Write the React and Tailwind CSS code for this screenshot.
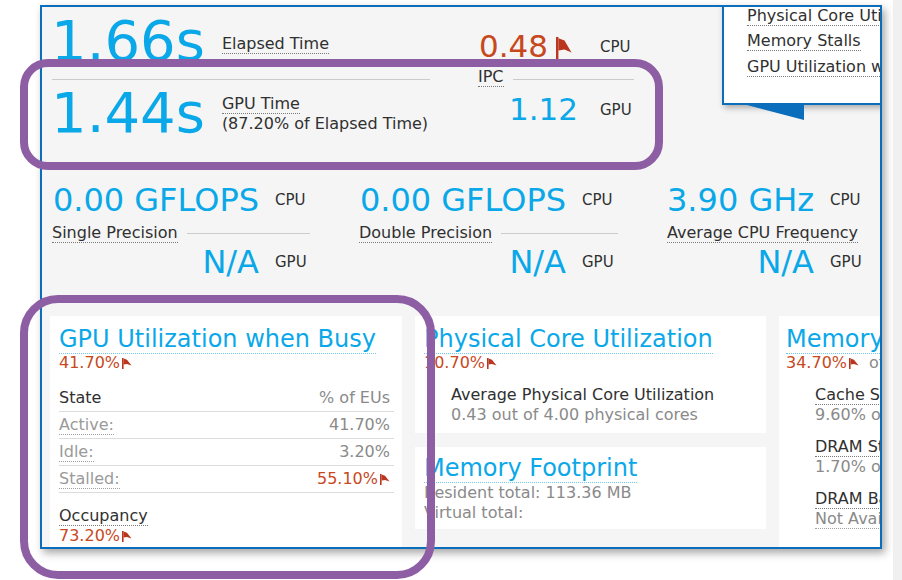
import React from "react";

const Flag = ({ size = "sm" }) =>
  size === "lg" ? (
    <svg width="17" height="24" viewBox="0 0 17 24" className="inline-block ml-[8px] mr-[5px]">
      <rect x="0" y="0" width="2.4" height="24" fill="#b9371f" />
      <path d="M2.4 1.2 L8.5 3.6 L15.5 15.5 L8.5 12.4 L2.4 13.4 Z" fill="#b9371f" />
    </svg>
  ) : (
    <svg width="10" height="11" viewBox="0 0 10 11" className="inline-block ml-[2px]">
      <rect x="0" y="0" width="1.6" height="11" fill="#b9371f" />
      <path d="M1.6 0.5 L5 1.8 L9.5 7.5 L5 6 L1.6 6.6 Z" fill="#b9371f" />
    </svg>
  );

const Dotted = ({ children, tone = "border-[#7a7a7a]" }) => (
  <span className={`border-b border-dotted ${tone}`}>{children}</span>
);

const Unit = ({ children }) => (
  <span className="text-[15px] leading-none text-[#303030]">{children}</span>
);

// CPU / GPU pair with a caption and a rule between them
const Metric = ({ w, valW, top, label, bottom, line = true }) => (
  <div className={w}>
    <div className="flex items-center">
      <div className={`${valW} whitespace-nowrap text-right text-[32px] leading-none text-[#0aa8e8]`}>{top}</div>
      <span className="ml-[16px]">
        <Unit>CPU</Unit>
      </span>
    </div>
    <div className="mt-[9px] flex h-[16px] items-center">
      <span className="whitespace-nowrap text-[16px] leading-none text-[#303030]">
        <Dotted>{label}</Dotted>
      </span>
      {line && <div className="ml-[9px] h-px flex-1 bg-[#cbcbcb]" />}
    </div>
    <div className="mt-[5px] flex items-center">
      <div className={`${valW} whitespace-nowrap text-right text-[32px] leading-none text-[#0aa8e8]`}>{bottom}</div>
      <span className="ml-[16px]">
        <Unit>GPU</Unit>
      </span>
    </div>
  </div>
);

const CardTitle = ({ children }) => (
  <div className="whitespace-nowrap text-[24px] leading-none text-[#0aa8e8]">
    <span className="border-b border-dotted border-[#72c9ef]">{children}</span>
  </div>
);

const Percent = ({ children, rest }) => (
  <div className="mt-[4px] whitespace-nowrap text-[16px] leading-none text-[#c8481e]">
    {children}
    <Flag />
    {rest && <span className="ml-[10px] text-[#8a8a8a]">{rest}</span>}
  </div>
);

const euRows = [
  { k: "Active:", v: "41.70%" },
  { k: "Idle:", v: "3.20%" },
  { k: "Stalled:", v: "55.10%", flag: true },
];

const memItems = [
  { k: "Cache Stalls", v: "9.60% of Clockticks" },
  { k: "DRAM Stalls", v: "1.70% of Clockticks" },
  { k: "DRAM Bandwidth Bound", v: "Not Available", na: true },
];

export default function App() {
  return (
    <div className="relative flex h-[580px] w-[902px] overflow-hidden bg-white font-['DejaVu_Sans',sans-serif]">
      <div className="w-[40px] flex-none" />

      <div className="relative mt-[5px] h-[544px] w-[842px] flex-none overflow-hidden border-2 border-[#0a6ebd] bg-[#f5f5f5] shadow-[3px_4px_8px_rgba(0,0,0,0.35)]">
        {/* elapsed / gpu time and IPC */}
        <div className="flex h-[177px] pl-[10px] pt-[4px]">
          <div className="w-[378px]">
            <div className="flex items-start">
              <span className="-ml-[1px] mt-[2px] text-[56px] leading-none text-[#0aa8e8]">1.66s</span>
              <div className="ml-[17px] mt-[23px] text-[16px] leading-[20px] text-[#303030]">
                <Dotted>Elapsed Time</Dotted>
              </div>
            </div>
            <div className="mt-[10px] h-px bg-[#cbcbcb]" />
            <div className="mt-[3px] flex items-start">
              <span className="-ml-[1px] mt-[2px] text-[56px] leading-none text-[#0aa8e8]">1.44s</span>
              <div className="ml-[17px] mt-[11px] whitespace-nowrap text-[16px] leading-[20px] text-[#303030]">
                <div>
                  <Dotted>GPU Time</Dotted>
                </div>
                <div>(87.20% of Elapsed Time)</div>
              </div>
            </div>
          </div>

          <div className="ml-[48px] w-[156px]">
            <div className="mt-[20px] flex items-center">
              <div className="w-[100px] whitespace-nowrap text-right text-[31px] leading-none text-[#c8481e]">
                0.48
                <Flag size="lg" />
              </div>
              <span className="ml-[22px]">
                <Unit>CPU</Unit>
              </span>
            </div>
            <div className="mt-[7px] flex items-center">
              <span className="text-[16px] leading-none text-[#303030]">
                <Dotted>IPC</Dotted>
              </span>
              <div className="ml-[9px] mt-[4px] h-px flex-1 bg-[#cbcbcb]" />
            </div>
            <div className="mt-[9px] flex items-center">
              <div className="w-[100px] text-right text-[31px] leading-none text-[#0aa8e8]">1.12</div>
              <span className="ml-[22px]">
                <Unit>GPU</Unit>
              </span>
            </div>
          </div>
        </div>

        {/* flops and frequency */}
        <div className="flex gap-[49px] pl-[10px]">
          <Metric w="w-[258px]" valW="w-[207px]" top="0.00 GFLOPS" label="Single Precision" bottom="N/A" />
          <Metric w="w-[259px]" valW="w-[207px]" top="0.00 GFLOPS" label="Double Precision" bottom="N/A" />
          <Metric w="w-[200px]" valW="w-[147px]" top="3.90 GHz" label="Average CPU Frequency" bottom="N/A" line={false} />
        </div>

        {/* cards */}
        <div className="mt-[38px] flex items-start gap-[13px] pl-[8px]">
          <div className="h-[240px] w-[352px] flex-none bg-white pl-[9px] pt-[11px]">
            <CardTitle>GPU Utilization when Busy</CardTitle>
            <Percent>41.70%</Percent>
            <div className="mt-[14px] w-[335px] text-[16px] leading-[26px]">
              <div className="flex justify-between border-b border-[#dcdcdc] pr-[4px]">
                <span className="text-[#303030]">State</span>
                <span className="text-[#8a8a8a]">% of EUs</span>
              </div>
              {euRows.map((r) => (
                <div key={r.k} className="flex justify-between border-b border-[#dcdcdc] pr-[4px]">
                  <span className="text-[#9a9a9a]">
                    <Dotted tone="border-[#a0a0a0]">{r.k}</Dotted>
                  </span>
                  {r.flag ? (
                    <span className="whitespace-nowrap text-[#c8481e]">
                      {r.v}
                      <Flag />
                    </span>
                  ) : (
                    <span className="text-[#8a8a8a]">{r.v}</span>
                  )}
                </div>
              ))}
            </div>
            <div className="mt-[15px] text-[16px] leading-none text-[#303030]">
              <Dotted>Occupancy</Dotted>
            </div>
            <Percent>73.20%</Percent>
          </div>

          <div className="flex w-[351px] flex-none flex-col gap-[14px]">
            <div className="h-[117px] bg-white pl-[9px] pt-[11px]">
              <CardTitle>Physical Core Utilization</CardTitle>
              <Percent>10.70%</Percent>
              <div className="ml-[27px] mt-[14px] whitespace-nowrap text-[16px] leading-[20px]">
                <div className="text-[#303030]">Average Physical Core Utilization</div>
                <div className="text-[#8a8a8a]">0.43 out of 4.00 physical cores</div>
              </div>
            </div>
            <div className="h-[82px] bg-white pl-[9px] pt-[9px]">
              <CardTitle>Memory Footprint</CardTitle>
              <div className="mt-[3px] whitespace-nowrap text-[16px] leading-[20px] text-[#8a8a8a]">
                <div>Resident total: 113.36 MB</div>
                <div>Virtual total:</div>
              </div>
            </div>
          </div>

          <div className="h-[240px] w-[220px] flex-none bg-white pl-[7px] pt-[11px]">
            <CardTitle>Memory Bound</CardTitle>
            <Percent rest="of Pipeline Slots">34.70%</Percent>
            <div className="ml-[29px] mt-[14px] flex flex-col gap-[12px] whitespace-nowrap text-[16px] leading-[20px]">
              {memItems.map((m) => (
                <div key={m.k}>
                  <div className="text-[#303030]">
                    <Dotted>{m.k}</Dotted>
                  </div>
                  <div className="text-[#8a8a8a]">
                    {m.na ? <Dotted tone="border-[#a0a0a0]">{m.v}</Dotted> : m.v}
                  </div>
                </div>
              ))}
            </div>
          </div>
        </div>

        {/* hint popup with its tail */}
        <div className="absolute left-[680px] top-[-40px] flex h-[138px] w-[220px] flex-col justify-end whitespace-nowrap border-b-2 border-l-2 border-[#0a6ebd] bg-white pb-[24px] pl-[23px] text-[16px] leading-[25.5px] text-[#303030] shadow-[2px_3px_6px_rgba(0,0,0,0.3)]">
          <div>
            <Dotted>Physical Core Utilization</Dotted>
          </div>
          <div>
            <Dotted>Memory Stalls</Dotted>
          </div>
          <div>
            <Dotted>GPU Utilization when Busy</Dotted>
          </div>
        </div>
        <svg width="57" height="15" viewBox="0 0 57 15" className="absolute left-[705px] top-[98px]">
          <polygon points="0,0 57,0 57,15" fill="#0a6ebd" />
        </svg>
      </div>

      <div className="w-[11px] flex-none" />
      <div className="h-full w-[9px] flex-none bg-[#f0f0f0]" />

      {/* highlight outlines */}
      <div className="pointer-events-none absolute left-[20px] top-[59px] h-[111px] w-[643px] rounded-[28px] border-[8px] border-[#8e5ea4]" />
      <div className="pointer-events-none absolute left-[20px] top-[295px] h-[284px] w-[415px] rounded-[38px] border-[8px] border-[#8e5ea4]" />
    </div>
  );
}
